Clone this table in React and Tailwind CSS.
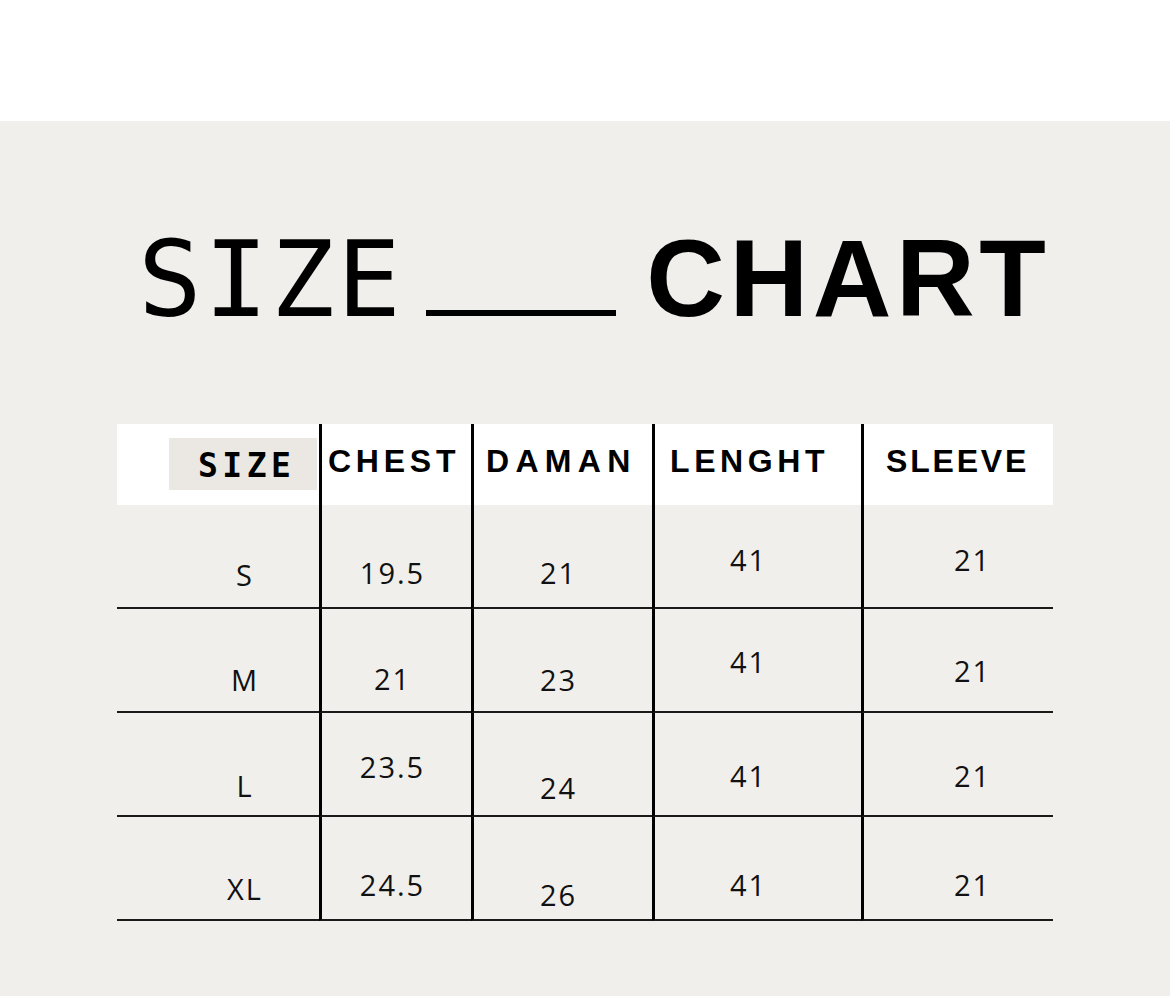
import React from "react";

const head = "h-[81px] bg-white border-l-[3px] border-black pt-[21px] font-['Liberation_Sans',Arial,sans-serif] font-bold text-[32px] leading-none text-black whitespace-nowrap";
const num = "font-['Open_Sans',sans-serif] text-[29px] leading-[29px] tracking-[2px] text-[#111]";
const cell = "h-[104px] border-b-2 border-[#1a1a1a] flex justify-center";

const rows = [
  [
    { t: "S", c: "pt-[55px]" },
    { t: "19.5", c: "pt-[53px]" },
    { t: "21", c: "pt-[53px]" },
    { t: "41", c: "pt-[40px]" },
    { t: "21", c: "pt-[40px]" },
  ],
  [
    { t: "M", c: "pt-[56px]" },
    { t: "21", c: "pt-[55px]" },
    { t: "23", c: "pt-[56px]" },
    { t: "41", c: "pt-[38px]" },
    { t: "21", c: "pt-[47px]" },
  ],
  [
    { t: "L", c: "pt-[58px]" },
    { t: "23.5", c: "pt-[39px]" },
    { t: "24", c: "pt-[60px]" },
    { t: "41", c: "pt-[48px]" },
    { t: "21", c: "pt-[48px]" },
  ],
  [
    { t: "XL", c: "pt-[57px]" },
    { t: "24.5", c: "pt-[53px]" },
    { t: "26", c: "pt-[63px]" },
    { t: "41", c: "pt-[53px]" },
    { t: "21", c: "pt-[53px]" },
  ],
];

const colCls = [
  "pl-[54px]",
  "border-l-[3px] border-l-black pr-[8px]",
  "border-l-[3px] border-l-black pr-[9px]",
  "border-l-[3px] border-l-black pr-[19px]",
  "border-l-[3px] border-l-black pl-[28px]",
];

export default function App() {
  return (
    <div className="w-[1170px] h-[996px] bg-white overflow-hidden">
      <div className="h-[121px] bg-white" />
      <div className="h-[875px] bg-[#f0efec] pt-[103px]">
        <div className="flex items-baseline pl-[138px] text-black">
          <span className="font-['DejaVu_Sans_Mono',monospace] text-[106px] leading-none tracking-[2.5px]">
            SIZE
          </span>
          <div className="ml-[23px] w-[190px] h-[6px] bg-black" />
          <span className="ml-[30px] font-['Liberation_Sans',Arial,sans-serif] font-bold text-[109px] leading-none tracking-[4.5px]">
            CHART
          </span>
        </div>

        <div className="ml-[117px] mt-[91px] w-[936px] grid grid-cols-[202px_152px_181px_209px_192px]">
          <div className="h-[81px] bg-white pt-[14px] pl-[52px]">
            <div className="w-[148px] h-[52px] bg-[#ebe8e3] pt-[11px] pl-[29px] font-['DejaVu_Sans_Mono',monospace] font-bold text-[33px] leading-none tracking-[4.5px] text-black">
              SIZE
            </div>
          </div>
          <div className={`${head} pl-[6px] tracking-[4.75px]`}>CHEST</div>
          <div className={`${head} pl-[12px] tracking-[6.3px]`}>DAMAN</div>
          <div className={`${head} pl-[15px] tracking-[4.6px]`}>LENGHT</div>
          <div className={`${head} pl-[22px] tracking-[2.8px]`}>SLEEVE</div>

          {rows.map((r, i) =>
            r.map((v, j) => (
              <div key={`${i}-${j}`} className={`${cell} ${colCls[j]}`}>
                <span className={`${num} ${v.c}`}>{v.t}</span>
              </div>
            ))
          )}
        </div>
      </div>
    </div>
  );
}
